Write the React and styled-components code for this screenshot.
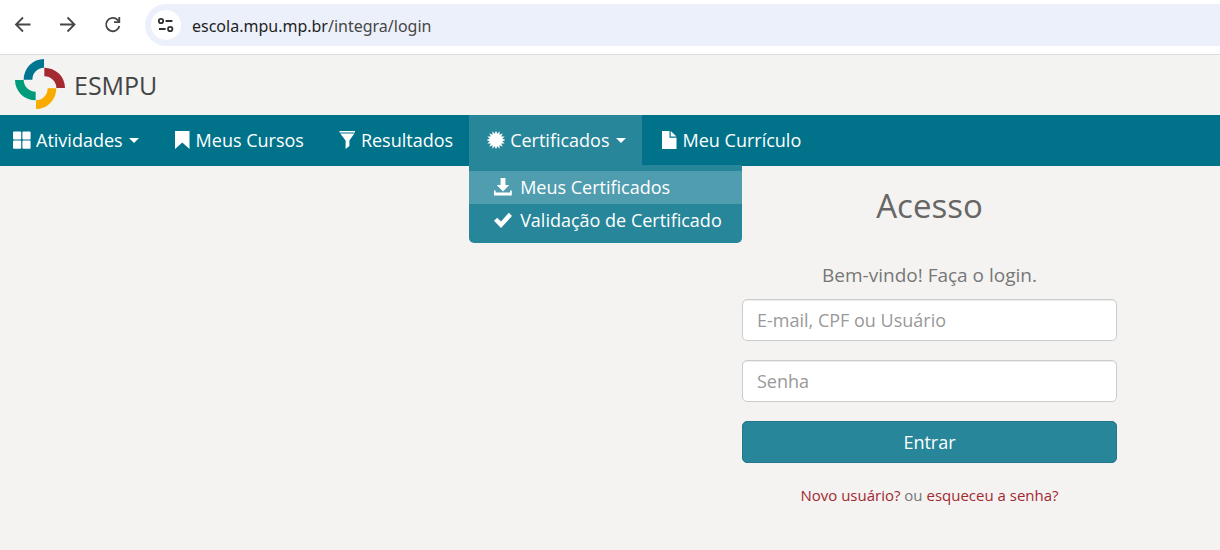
import React, { useState } from 'react';
import styled, { createGlobalStyle } from 'styled-components'

const GlobalStyle = createGlobalStyle`
    * {
        box-sizing: border-box;
    }
    body {
        margin: 0;
        background-color: #f4f3f1;
        color: #777777;
        font-family: "Open Sans", "Noto Sans", sans-serif;
        font-size: 18px;
    }
    ul {
        list-style: none;
        margin: 0;
        padding: 0;
    }
`

const BrowserBar = styled.div`
    display: flex;
    align-items: center;
    height: 55px;
    padding-bottom: 5px;
    background-color: white;
    border-bottom: 1px solid #dddddb;
`

const BrowserButton = styled.button`
    display: flex;
    align-items: center;
    justify-content: center;
    width: 45px;
    height: 42px;
    padding: 0;
    border: 0;
    background: none;
    color: #474747;
    cursor: pointer;
`

const AddressBar = styled.div`
    flex: 1;
    display: flex;
    align-items: center;
    height: 42px;
    margin-left: 10px;
    padding-left: 6px;
    border-radius: 21px 0 0 21px;
    background-color: #ecf0fa;
    color: #1f1f1f;
    font-family: "Noto Sans", "Open Sans", sans-serif;
    font-size: 16px;
    line-height: 24px;
`

const SiteInfo = styled.button`
    display: flex;
    align-items: center;
    justify-content: center;
    width: 30px;
    height: 30px;
    margin-right: 11px;
    padding: 0;
    border: 0;
    border-radius: 50%;
    background-color: white;
    color: #303030;
`

const Url = styled.span`
    padding-top: 2px;
`

const UrlPath = styled.span`
    color: #474747;
`

const Header = styled.header`
    display: flex;
    align-items: center;
    height: 60px;
    padding-left: 15px;
    padding-bottom: 2px;
    background-color: #f3f3f2;
`

const Brand = styled.a`
    display: flex;
    align-items: center;
    gap: 9px;
    color: #444444;
    font-size: 25px;
    line-height: 34px;
    text-decoration: none;

    span {
        padding-top: 2px;
    }
`

const NavBar = styled.nav`
    background-color: #00738b;
    padding-left: 13px;
`

const NavList = styled.ul`
    display: flex;
    height: 51px;
`

const NavItem = styled.li`
    position: relative;

    &:first-child > a {
        padding-left: 0;
    }
`

const NavLink = styled.a`
    display: flex;
    align-items: center;
    height: 50px;
    padding: 0 16px 0 18px;
    background-color: ${props => props.$open ? "#27869a" : "transparent"};
    color: white;
    line-height: 24px;
    text-decoration: none;
    white-space: nowrap;

    svg {
        margin-right: 5px;
    }
`

const Caret = styled.span`
    margin-left: 6px;
    border-top: 5px solid white;
    border-left: 5px solid transparent;
    border-right: 5px solid transparent;
`

const Dropdown = styled.ul`
    position: absolute;
    top: 100%;
    left: 0;
    margin-top: -1px;
    padding: 6px 0;
    border-radius: 0 0 5px 5px;
    background-color: #27869a;
`

const DropdownLink = styled.a`
    display: flex;
    align-items: center;
    height: 33px;
    padding: 0 20px 1px 25px;
    background-color: ${props => props.$active ? "#509db0" : "transparent"};
    color: white;
    line-height: 24px;
    text-decoration: none;
    white-space: nowrap;

    svg {
        margin-right: 8px;
    }
`

const Login = styled.form`
    display: flex;
    flex-direction: column;
    max-width: 375px;
    margin: 0 103px 0 auto;
    text-align: center;
`

const Title = styled.h1`
    margin: 16px 0 33px;
    color: #666666;
    font-size: 33px;
    font-weight: 400;
    line-height: 48px;
`

const Welcome = styled.p`
    margin: 0 0 12px;
    font-size: 19px;
    line-height: 24px;
`

const Field = styled.input`
    width: 100%;
    height: 42px;
    margin-bottom: 19px;
    padding: 0 14px;
    border: 1px solid #cccccc;
    border-radius: 5px;
    background-color: white;
    box-shadow: inset 0 1px 1px rgba(0, 0, 0, 0.075);
    color: #555555;
    font: inherit;

    &::placeholder {
        color: #999999;
        opacity: 1;
    }
`

const SubmitButton = styled.button`
    height: 42px;
    margin-bottom: 22px;
    padding: 0;
    border: 1px solid #217689;
    border-radius: 5px;
    background-color: #27869a;
    color: white;
    font: inherit;
    cursor: pointer;
`

const Links = styled.p`
    margin: 0;
    font-size: 15px;
    line-height: 20px;

    a {
        color: #a12830;
        text-decoration: none;
    }
`

const Icon = ({ children }) => (
    <svg width="18" height="18" viewBox="0 0 18 18" fill="currentColor" aria-hidden="true">
        {children}
    </svg>
)

const LineIcon = ({ children }) => (
    <svg width="20" height="20" viewBox="0 0 20 20" fill="none" stroke="currentColor" strokeWidth="1.8" aria-hidden="true">
        {children}
    </svg>
)

const GridIcon = () => (
    <Icon>
        <rect x="0" y="0.4" width="8.2" height="8.2" rx="1" />
        <rect x="9.4" y="0.4" width="8.2" height="8.2" rx="1" />
        <rect x="0" y="9.6" width="8.2" height="8.2" rx="1" />
        <rect x="9.4" y="9.6" width="8.2" height="8.2" rx="1" />
    </Icon>
)

const BookmarkIcon = () => (
    <Icon><path d="M2 0H16.5V18L9.3 11.6L2 18Z" /></Icon>
)

const FilterIcon = () => (
    <Icon><path d="M1.5 0H17V1.6H1.5ZM2.2 2.6H16.4L11.4 9.4V15L7.6 18V9.4Z" /></Icon>
)

// long thin spikes around a disc
const sealPoints = Array.from({ length: 32 }, (_, i) => {
    const radius = i % 2 ? 6.4 : 9.4
    const angle = i * Math.PI / 16
    return `${(9 + radius * Math.cos(angle)).toFixed(2)},${(9 + radius * Math.sin(angle)).toFixed(2)}`
}).join(" ")

const SealIcon = () => (
    <Icon><polygon points={sealPoints} /></Icon>
)

const FileIcon = () => (
    <Icon><path d="M2 0H9.5V6.8H16.5V18H2ZM10.7 0L16.5 5.6H10.7Z" /></Icon>
)

const SaveIcon = () => (
    <Icon><path d="M6.6 0H11.4V7H15.2L9 13.6L2.8 7H6.6ZM0 12.6H1.6V14.6H16V12.6H17.8V17.6H0Z" /></Icon>
)

const CheckIcon = () => (
    <Icon><path d="M0 9.8L3.2 6.8L7 10.4L14.8 1.8L18 5L7 17Z" /></Icon>
)

const blade = "M87 0A61 62 0 0 0 26 62H52A35 36 0 0 1 87 26Z"

const Logo = () => (
    <svg width="50" height="50" viewBox="0 0 150 150" aria-hidden="true">
        <path d={blade} fill="#007590" />
        <path d={blade} fill="#a42a32" transform="rotate(90 75 75)" />
        <path d={blade} fill="#f9ab00" transform="rotate(180 75 75)" />
        <path d={blade} fill="#009b7a" transform="rotate(270 75 75)" />
    </svg>
)

const navEntries = [
    { label: "Atividades", icon: <GridIcon />, caret: true },
    { label: "Meus Cursos", icon: <BookmarkIcon /> },
    { label: "Resultados", icon: <FilterIcon /> },
    {
        label: "Certificados",
        icon: <SealIcon />,
        caret: true,
        items: [
            { label: "Meus Certificados", icon: <SaveIcon />, active: true },
            { label: "Validação de Certificado", icon: <CheckIcon /> }
        ]
    },
    { label: "Meu Currículo", icon: <FileIcon /> }
]

const Browser = () => (
    <BrowserBar>
        <BrowserButton aria-label="Voltar">
            <LineIcon><path d="M17.5 9.5H3.5M10 2.5L3 9.5L10 16.5" /></LineIcon>
        </BrowserButton>
        <BrowserButton aria-label="Avançar">
            <LineIcon><path d="M2 9.5H16M9.5 2.5L16.5 9.5L9.5 16.5" /></LineIcon>
        </BrowserButton>
        <BrowserButton aria-label="Recarregar">
            <LineIcon>
                <path d="M16.4 11A6.7 6.7 0 1 1 14.6 4.8L16 6.4" />
                <path d="M16.3 2V7.2H11" />
            </LineIcon>
        </BrowserButton>
        <AddressBar>
            <SiteInfo aria-label="Informações do site">
                <LineIcon>
                    <circle cx="5" cy="6" r="2.2" />
                    <path d="M9.6 6H16.4M3 14H9.6" />
                    <circle cx="14.2" cy="14" r="2.2" />
                </LineIcon>
            </SiteInfo>
            <Url>escola.mpu.mp.br<UrlPath>/integra/login</UrlPath></Url>
        </AddressBar>
    </BrowserBar>
)

const App = () => {
    const [open, setOpen] = useState("Certificados")

    const toggle = (event, entry) => {
        event.preventDefault()
        setOpen(open === entry.label ? null : entry.label)
    }

    return (
        <>
            <GlobalStyle />
            <Browser />
            <Header>
                <Brand href="#"><Logo /><span>ESMPU</span></Brand>
            </Header>
            <NavBar>
                <NavList>
                    {navEntries.map(entry => (
                        <NavItem key={entry.label}>
                            <NavLink
                                href="#"
                                $open={open === entry.label}
                                onClick={event => toggle(event, entry)}
                            >
                                {entry.icon}
                                {entry.label}
                                {entry.caret && <Caret />}
                            </NavLink>
                            {entry.items && open === entry.label && (
                                <Dropdown>
                                    {entry.items.map(item => (
                                        <li key={item.label}>
                                            <DropdownLink href="#" $active={item.active}>
                                                {item.icon}
                                                {item.label}
                                            </DropdownLink>
                                        </li>
                                    ))}
                                </Dropdown>
                            )}
                        </NavItem>
                    ))}
                </NavList>
            </NavBar>
            <main>
                <Login onSubmit={event => event.preventDefault()}>
                    <Title>Acesso</Title>
                    <Welcome>Bem-vindo! Faça o login.</Welcome>
                    <Field type="text" aria-label="E-mail, CPF ou Usuário" placeholder="E-mail, CPF ou Usuário" />
                    <Field type="password" aria-label="Senha" placeholder="Senha" />
                    <SubmitButton type="submit">Entrar</SubmitButton>
                    <Links>
                        <a href="#">Novo usuário?</a> ou <a href="#">esqueceu a senha?</a>
                    </Links>
                </Login>
            </main>
        </>
    )
}

export default App;
